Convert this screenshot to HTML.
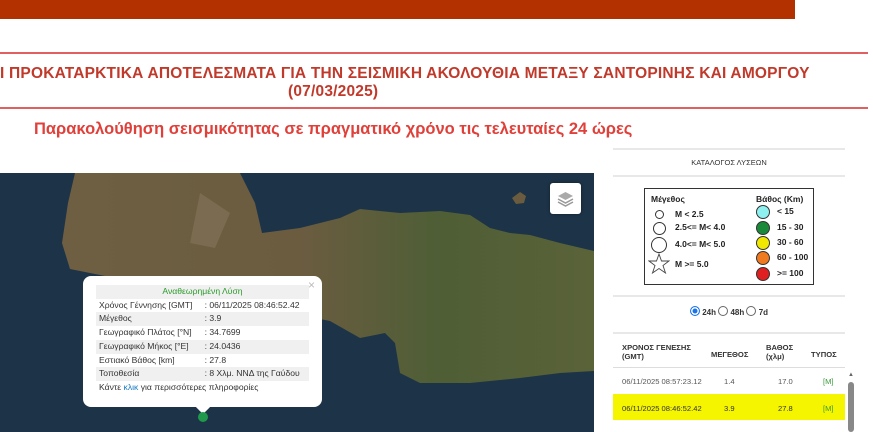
<!DOCTYPE html>
<html><head><meta charset="utf-8"><style>
body{margin:0;width:873px;height:432px;overflow:hidden;background:#fff;font-family:"Liberation Sans",sans-serif;position:relative}
.a{position:absolute}
.hl{position:absolute;height:2px;background:#e06060}
.t{color:#c0392b;font-size:15.5px;white-space:nowrap;letter-spacing:.2px}
.gl{position:absolute;height:2px;background:#e8e8e8;left:613px;width:232px}
.pop td{padding:0 3px;height:13.7px;line-height:13.7px;font-size:8.6px;color:#333;white-space:nowrap}
.pop tr:nth-child(odd) td{background:#f0f0f0}
.lg{font-size:8.5px;font-weight:bold;color:#222}
.c{position:absolute;border-radius:50%;border:1px solid #333}
.tb{font-size:7.6px;color:#333}
</style></head><body>
<div class="a" style="left:0;top:0;width:795px;height:19px;background:#b33000"></div>
<div class="hl" style="left:0;top:52px;width:868px"></div>
<div class="hl" style="left:0;top:107px;width:868px"></div>
<div class="a t" style="left:0;top:65px;font-weight:bold">Ι ΠΡΟΚΑΤΑΡΚΤΙΚΑ ΑΠΟΤΕΛΕΣΜΑΤΑ ΓΙΑ ΤΗΝ ΣΕΙΣΜΙΚΗ ΑΚΟΛΟΥΘΙΑ ΜΕΤΑΞΥ ΣΑΝΤΟΡΙΝΗΣ ΚΑΙ ΑΜΟΡΓΟΥ</div>
<div class="a t" style="left:288px;top:83px;font-weight:bold">(07/03/2025)</div>
<div class="a" style="left:34px;top:120px;color:#e0403a;font-size:16.5px;font-weight:bold;white-space:nowrap">Παρακολούθηση σεισμικότητας σε πραγματικό χρόνο τις τελευταίες 24 ώρες</div>

<svg class="a" style="left:0;top:173px" width="594" height="259">
<defs><linearGradient id="g" x1="0" x2="1"><stop offset="0" stop-color="#6e5f42"/><stop offset=".45" stop-color="#6b5c40"/><stop offset=".7" stop-color="#4f5e36"/><stop offset="1" stop-color="#5a6238"/></linearGradient></defs>
<rect width="594" height="259" fill="#1d3347"/>
<path d="M75 0 L240 0 L255 30 L262 60 L300 55 L340 45 L360 36 L400 40 L440 38 L470 42 L490 55 L510 60 L530 62 L560 70 L594 78 L594 198 L560 200 L520 205 L470 210 L420 210 L400 200 L395 170 L385 160 L360 165 L330 148 L290 140 L230 120 L190 110 L150 108 L110 104 L70 96 L62 70 L68 30 Z" fill="url(#g)"/>
<path d="M512 25 l8 -6 l6 4 l-2 7 l-8 1z" fill="#6b5c40"/>
<path d="M200 20 L230 40 L215 75 L190 70 Z" fill="#8a7a60" opacity=".5"/>
</svg>
<div class="a" style="left:550px;top:183px;width:31px;height:31px;background:#fff;border-radius:3px;box-shadow:0 0 3px rgba(0,0,0,.4)">
<svg width="31" height="31"><path d="M8 13 L15.5 9 L23 13 L15.5 17Z" fill="#aaa"/><path d="M8 16 L15.5 20 L23 16" fill="none" stroke="#999" stroke-width="1.5"/><path d="M8 19 L15.5 23 L23 19" fill="none" stroke="#999" stroke-width="1.5"/></svg></div>

<div class="a pop" style="left:83px;top:276px;width:239px;height:131px;background:#fff;border-radius:8px">
<span class="a" style="right:7px;top:2px;color:#bbb;font-size:12px">×</span>
<table class="a" style="left:13px;top:9px;border-collapse:collapse;width:213px">
<tr><td colspan="2" style="text-align:center;color:#2a9a2a">Αναθεωρημένη Λύση</td></tr>
<tr><td>Χρόνος Γέννησης [GMT]</td><td>: 06/11/2025 08:46:52.42</td></tr>
<tr><td>Μέγεθος</td><td>: 3.9</td></tr>
<tr><td>Γεωγραφικό Πλάτος [°N]</td><td>: 34.7699</td></tr>
<tr><td>Γεωγραφικό Μήκος [°E]</td><td>: 24.0436</td></tr>
<tr><td>Εστιακό Βάθος [km]</td><td>: 27.8</td></tr>
<tr><td>Τοποθεσία</td><td>: 8 Χλμ. ΝΝΔ της Γαύδου</td></tr>
<tr><td colspan="2" style="background:#fff">Κάντε <span style="color:#1a7bc4">κλικ</span> για περισσότερες πληροφορίες</td></tr>
</table></div>
<div class="a" style="left:198px;top:402px;width:10px;height:10px;background:#fff;transform:rotate(45deg)"></div>
<div class="a" style="left:198px;top:412px;width:10px;height:10px;border-radius:50%;background:#1e9a4a"></div>

<div class="gl" style="top:148px"></div>
<div class="a" style="left:613px;top:158px;width:232px;text-align:center;font-size:7.5px;color:#333">ΚΑΤΑΛΟΓΟΣ ΛΥΣΕΩΝ</div>
<div class="gl" style="top:175px"></div>
<div class="a" style="left:644px;top:188px;width:168px;height:95px;border:1px solid #333;background:#fff">
<div class="a lg" style="left:6px;top:5px">Μέγεθος</div>
<div class="a lg" style="left:111px;top:5px">Βάθος (Km)</div>
<div class="c" style="left:10px;top:21px;width:7px;height:7px"></div><div class="a lg" style="left:30px;top:20px">M &lt; 2.5</div>
<div class="c" style="left:8px;top:33px;width:11px;height:11px"></div><div class="a lg" style="left:30px;top:33px">2.5&lt;= M&lt; 4.0</div>
<div class="c" style="left:6px;top:48px;width:14px;height:14px"></div><div class="a lg" style="left:30px;top:50px">4.0&lt;= M&lt; 5.0</div>
<svg class="a" style="left:3px;top:64px" width="22" height="22"><path d="M11 1 L13.5 8 L21 8 L15 12.5 L17.5 20 L11 15.5 L4.5 20 L7 12.5 L1 8 L8.5 8Z" fill="#fff" stroke="#444" stroke-width=".9"/></svg><div class="a lg" style="left:30px;top:70px">M &gt;= 5.0</div>
<div class="c" style="left:111px;top:16px;width:12px;height:12px;background:#8ff0f0"></div><div class="a lg" style="left:132px;top:17px">&lt; 15</div>
<div class="c" style="left:111px;top:32px;width:12px;height:12px;background:#1a8a3a"></div><div class="a lg" style="left:132px;top:33px">15 - 30</div>
<div class="c" style="left:111px;top:47px;width:12px;height:12px;background:#f0e800"></div><div class="a lg" style="left:132px;top:48px">30 - 60</div>
<div class="c" style="left:111px;top:62px;width:12px;height:12px;background:#f07a20"></div><div class="a lg" style="left:132px;top:63px">60 - 100</div>
<div class="c" style="left:111px;top:78px;width:12px;height:12px;background:#e02020"></div><div class="a lg" style="left:132px;top:79px">&gt;= 100</div>
</div>
<div class="gl" style="top:295px"></div>
<div class="a" style="left:690px;top:306px;font-size:8px;font-weight:bold;color:#333;white-space:nowrap">
<span style="display:inline-block;width:8px;height:8px;border-radius:50%;background:#1a73e8;border:1px solid #1a73e8;vertical-align:-1px;box-shadow:inset 0 0 0 1.5px #fff"></span> 24h <span style="display:inline-block;width:8px;height:8px;border-radius:50%;border:1px solid #666;vertical-align:-1px"></span> 48h <span style="display:inline-block;width:8px;height:8px;border-radius:50%;border:1px solid #666;vertical-align:-1px"></span> 7d</div>
<div class="gl" style="top:332px"></div>
<div class="a tb" style="left:622px;top:343px;font-weight:bold;line-height:9px">ΧΡΟΝΟΣ ΓΕΝΕΣΗΣ<br>(GMT)</div>
<div class="a tb" style="left:711px;top:350px;font-weight:bold">ΜΕΓΕΘΟΣ</div>
<div class="a tb" style="left:766px;top:343px;font-weight:bold;line-height:9px">ΒΑΘΟΣ<br>(χλμ)</div>
<div class="a tb" style="left:811px;top:350px;font-weight:bold">ΤΥΠΟΣ</div>
<div class="a" style="left:613px;top:367px;width:232px;height:1px;background:#ddd"></div>
<div class="a" style="left:613px;top:394px;width:232px;height:26px;background:#f5f500"></div>
<div class="a tb" style="left:622px;top:377px;color:#555">06/11/2025 08:57:23.12</div><div class="a tb" style="left:724px;top:377px;color:#555">1.4</div><div class="a tb" style="left:778px;top:377px;color:#555">17.0</div><div class="a tb" style="left:823px;top:377px;color:#3a9a3a">[M]</div>
<div class="a tb" style="left:622px;top:404px">06/11/2025 08:46:52.42</div><div class="a tb" style="left:724px;top:404px">3.9</div><div class="a tb" style="left:778px;top:404px">27.8</div><div class="a tb" style="left:823px;top:404px;color:#3a9a3a">[M]</div>
<div class="a" style="left:848px;top:372px;color:#666;font-size:6px">▲</div>
<div class="a" style="left:848px;top:382px;width:6px;height:50px;background:#888;border-radius:3px"></div>
</body></html>
